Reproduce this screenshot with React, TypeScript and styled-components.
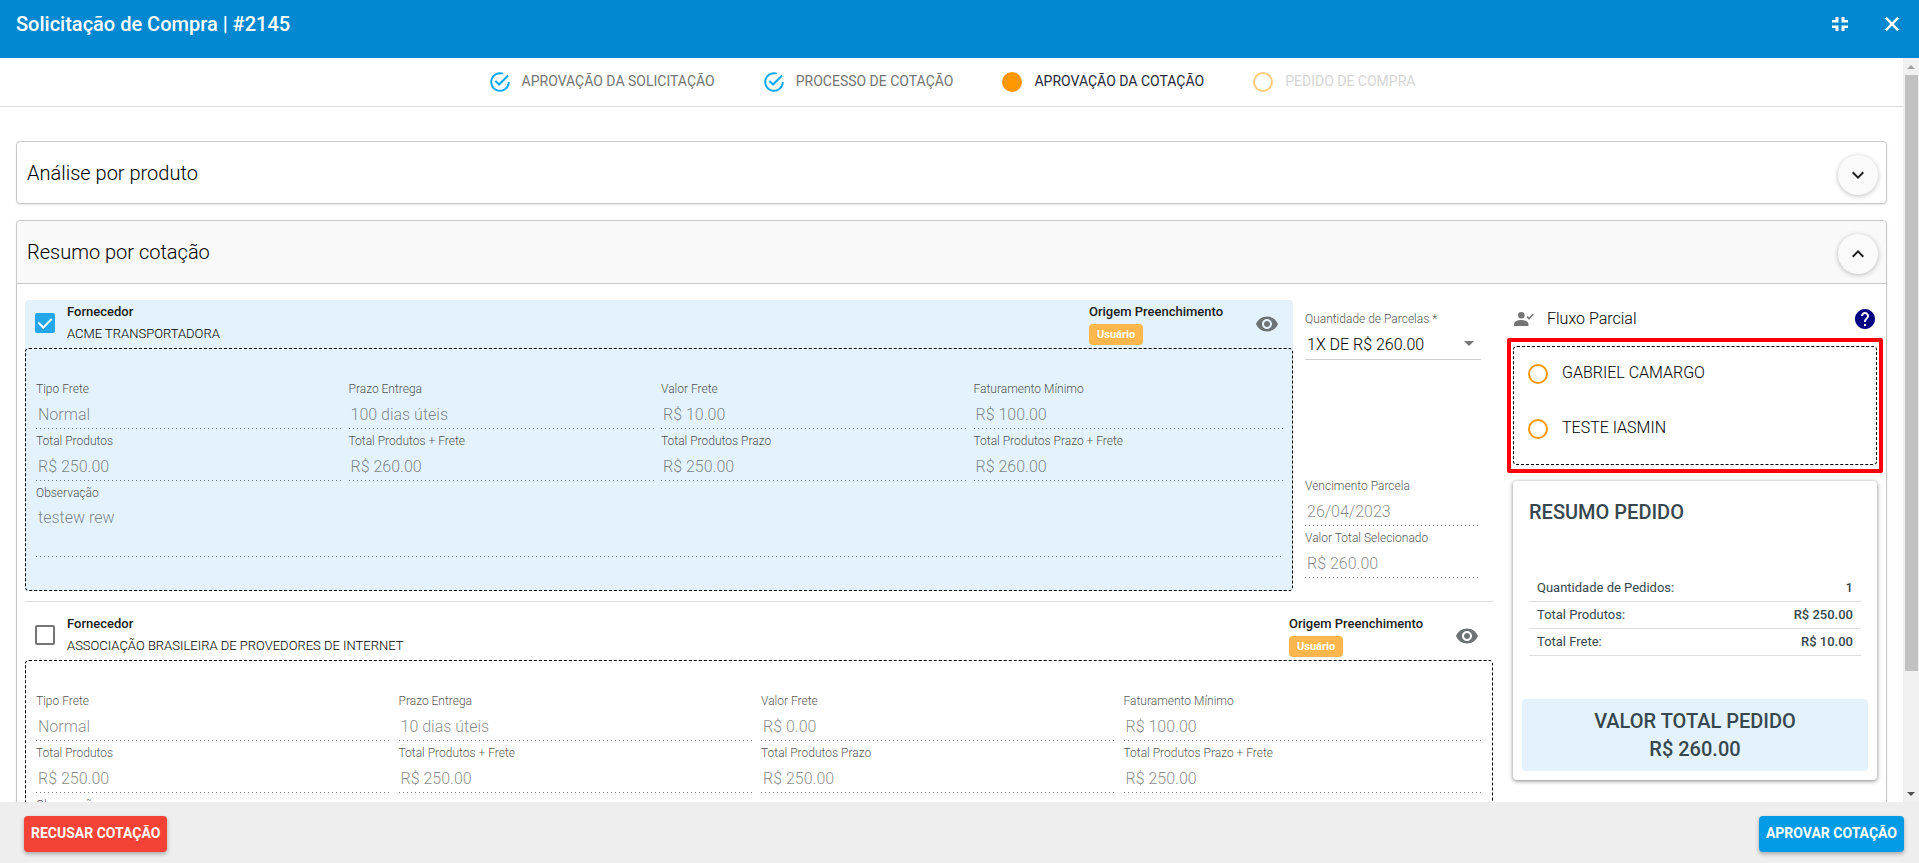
import React, { useId, useState } from "react";
import styled, { createGlobalStyle, css } from "styled-components";
import { IoMdCheckmarkCircleOutline } from "react-icons/io";
import { MdRemoveRedEye, MdHelp, MdArrowDropDown, MdKeyboardArrowDown, MdKeyboardArrowUp } from "react-icons/md";

const GlobalStyle = createGlobalStyle`
  * { box-sizing: border-box; }
  body {
    margin: 0;
    background: #fff;
    color: #000;
    font-family: Roboto, "Liberation Sans", sans-serif;
    font-size: 14px;
    font-weight: 300;
  }
  h1, h2, h3, p, dl, dd, dt, ol, ul { margin: 0; padding: 0; font-weight: inherit; }
  button, input, select, textarea { font-family: inherit; font-weight: inherit; }
  svg { display: block; }
`;

const Dialog = styled.div`
  display: flex;
  flex-direction: column;
  height: 100vh;
  overflow: hidden;
`;

const TopBar = styled.header`
  display: flex;
  justify-content: space-between;
  flex: none;
  height: 58px;
  padding: 10px 15px 0 16px;
  background: #0288d1;
  color: #fff;
`;

const DialogTitle = styled.h1`
  font-size: 20px;
  line-height: 28px;
  font-weight: 500;
`;

const TopActions = styled.div`
  display: flex;
  gap: 28px;
  height: 28px;
  align-items: center;
`;

const IconButton = styled.button`
  display: grid;
  place-items: center;
  width: 24px;
  height: 24px;
  padding: 0;
  border: 0;
  background: none;
  color: inherit;
  font-size: 24px;
  cursor: pointer;
`;

const Body = styled.div`
  display: flex;
  flex: 1;
  min-height: 0;
`;

const Scroller = styled.main`
  flex: 1;
  min-width: 0;
  overflow-y: auto;
  scrollbar-width: none;
`;

const ScrollBar = styled.div`
  display: flex;
  flex-direction: column;
  flex: none;
  width: 16px;
  background: #f1f1f1;
`;

const ScrollArrow = styled.div<{ $down?: boolean }>`
  display: grid;
  place-items: center;
  height: 17px;
  color: ${(p) => (p.$down ? "#505050" : "#a3a3a3")};
`;

const ScrollTrack = styled.div`
  flex: 1;
  padding: 0 1px 0 2px;
`;

const ScrollThumb = styled.div`
  height: 84%;
  background: #c1c1c1;
`;

const Steps = styled.ol`
  display: flex;
  justify-content: center;
  gap: 49px;
  height: 49px;
  padding-left: 2px;
  border-bottom: 1px solid #dedede;
  list-style: none;
`;

type StepState = "done" | "current" | "next";

const stepColor = { done: "#757575", current: "#28283c", next: "#d6d6d6" };

const StepItem = styled.li<{ $state: StepState }>`
  display: flex;
  align-items: center;
  gap: 12px;
  height: 48px;
  color: ${(p) => stepColor[p.$state]};
  font-size: 14px;
  line-height: 20px;
  font-weight: 400;
`;

const StepLabel = styled.span`
  padding-bottom: 2px;
`;

const StepMark = styled.span<{ $state: StepState }>`
  display: grid;
  place-content: center;
  width: 20px;
  height: 20px;
  color: ${(p) => (p.$state === "done" ? "#03a9f4" : "#ff9800")};
  font-size: 24px;
  opacity: ${(p) => (p.$state === "next" ? 0.5 : 1)};
`;

const Circle = styled.span<{ $filled?: boolean }>`
  width: 20px;
  height: 20px;
  border: 2px solid #ff9800;
  border-radius: 50%;
  background: ${(p) => (p.$filled ? "#ff9800" : "transparent")};
`;

const Panels = styled.div`
  display: flex;
  flex-direction: column;
  gap: 16px;
  padding: 34px 16px 24px;
`;

const Panel = styled.section`
  border: 1px solid #c8c8c8;
  border-radius: 4px;
  box-shadow: 0 1px 2px rgba(0, 0, 0, 0.1);
`;

const PanelHeader = styled.header<{ $open?: boolean }>`
  display: flex;
  align-items: center;
  justify-content: space-between;
  height: 61px;
  padding: 5px 8px 0 10px;
  ${(p) =>
    p.$open &&
    css`
      height: 63px;
      padding-top: 4px;
      background: #f9f9f9;
      border-bottom: 1px solid #c8c8c8;
      border-radius: 4px 4px 0 0;
    `}
`;

const PanelTitle = styled.h2`
  padding-bottom: 4px;
  font-size: 20px;
  line-height: 24px;
`;

const Fab = styled.button`
  display: grid;
  place-items: center;
  width: 40px;
  height: 40px;
  padding: 0;
  border: 0;
  border-radius: 50%;
  background: #fafafa;
  color: #212121;
  font-size: 24px;
  box-shadow: 0 1px 5px rgba(0, 0, 0, 0.26);
  cursor: pointer;
`;

const Summary = styled.div`
  display: grid;
  grid-template-columns: minmax(0, 1fr) 364px;
  gap: 20px;
  padding: 16px 9px 24px 8px;
`;

const QuoteList = styled.div`
  display: flex;
  flex-direction: column;
`;

const QuoteRow = styled.div`
  display: grid;
  grid-template-columns: minmax(0, 1fr);
  & + & {
    margin-top: 10px;
    padding-top: 10px;
    border-top: 1px solid #dedede;
  }
`;

const SplitRow = styled(QuoteRow)`
  grid-template-columns: minmax(0, 1fr) 188px;
  gap: 12px;
`;

const QuoteCard = styled.article<{ $selected?: boolean }>`
  border-radius: 4px;
  background: ${(p) => (p.$selected ? "#e3f2fd" : "transparent")};
`;

const QuoteHeader = styled.header`
  display: flex;
  height: 48px;
  padding: 0 14px 0 10px;
`;

const CheckBox = styled.input`
  appearance: none;
  display: grid;
  place-items: center;
  flex: none;
  width: 20px;
  height: 20px;
  margin: 13px 12px 0 0;
  border: 2px solid #757575;
  border-radius: 2px;
  cursor: pointer;
  &:checked {
    border-color: #22a7ea;
    background: #22a7ea;
  }
  &:checked::before {
    content: "";
    width: 6px;
    height: 11px;
    margin-top: -3px;
    border: solid #fff;
    border-width: 0 2px 2px 0;
    transform: rotate(45deg);
  }
`;

const Supplier = styled.label`
  flex: 1;
  padding-top: 1px;
  font-size: 13px;
  line-height: 22px;
  strong { display: block; color: #212121; font-weight: 500; }
`;

const Origin = styled.div`
  width: 166px;
  padding-top: 1px;
  font-size: 13px;
  line-height: 22px;
  strong { display: block; color: #212121; font-weight: 500; }
`;

const Badge = styled.span`
  display: inline-block;
  height: 21px;
  margin-top: 1px;
  padding: 0 8px;
  border-radius: 4px;
  background: #ffb74d;
  color: #fff;
  font-size: 11px;
  line-height: 21px;
  font-weight: 700;
  vertical-align: top;
`;

const EyeButton = styled(IconButton)`
  margin-top: 12px;
  color: #6d7275;
`;

const Details = styled.div`
  display: grid;
  grid-template-columns: repeat(4, minmax(0, 1fr));
  padding: 28px 6px 33px 10px;
  border: 1px dashed #000;
  border-radius: 4px;
`;

const FieldBox = styled.div<{ $wide?: boolean }>`
  display: flex;
  flex-direction: column;
  min-width: 0;
  padding: 5px 7px 0 0;
  ${(p) => p.$wide && "grid-column: 1 / -1;"}
  &:nth-child(4n), &:last-child { padding-right: 3px; }
`;

const FieldLabel = styled.label`
  color: rgba(0, 0, 0, 0.7);
  font-size: 12px;
  line-height: 14px;
`;

const valueStyle = css`
  display: block;
  width: 100%;
  height: 29px;
  margin-top: 4px;
  padding: 0 2px;
  border: 0;
  border-radius: 0;
  background: linear-gradient(to right, rgba(0, 0, 0, 0.5) 25%, transparent 0) 0 100% / 4px 1px repeat-x;
  color: rgba(0, 0, 0, 0.48);
  font-size: 16px;
  line-height: 20px;
`;

const FieldInput = styled.input`
  ${valueStyle}
`;

const FieldArea = styled.textarea`
  ${valueStyle}
  height: 53px;
  padding-top: 4px;
  resize: none;
  overflow: hidden;
`;

const Installments = styled.aside`
  display: flex;
  flex-direction: column;
  justify-content: space-between;
  padding: 7px 12px 13px 0;
`;

const FieldStack = styled.div`
  display: grid;
  ${FieldBox} { padding-right: 3px; }
`;

const SelectWrap = styled.div`
  display: grid;
  align-items: center;
  border-bottom: 1px solid #d0d0d0;
  svg { grid-area: 1 / 1; justify-self: end; color: #757575; font-size: 24px; pointer-events: none; }
`;

const Select = styled.select`
  grid-area: 1 / 1;
  appearance: none;
  width: 100%;
  height: 33px;
  padding: 3px 24px 0 2px;
  border: 0;
  background: transparent;
  color: #000;
  font-size: 16px;
`;

const Side = styled.aside`
  display: flex;
  flex-direction: column;
`;

const FlowHeader = styled.header`
  display: flex;
  align-items: center;
  height: 38px;
  margin-bottom: 8px;
  padding-left: 1px;
  color: #757575;
`;

const FlowTitle = styled.h3`
  flex: 1;
  padding-left: 13px;
  color: #000;
  font-size: 16px;
  line-height: 20px;
`;

const HelpButton = styled(IconButton)`
  color: #000080;
`;

const Approvers = styled.ul`
  position: relative;
  display: flex;
  flex-direction: column;
  gap: 35px;
  padding: 17px 14px 25px;
  border: 1px dashed #000;
  border-radius: 4px;
  list-style: none;
  &::after {
    content: "";
    position: absolute;
    inset: -9px -7px;
    border: 4px solid #fb0007;
    border-radius: 2px;
    pointer-events: none;
  }
`;

const Approver = styled.li`
  display: flex;
  gap: 14px;
  font-size: 16px;
  line-height: 18px;
`;

const OrderCard = styled.section`
  margin-top: 16px;
  padding: 19px 9px 9px;
  border-radius: 4px;
  color: #37474f;
  box-shadow: 0 1px 4px rgba(0, 0, 0, 0.5);
`;

const OrderTitle = styled.h3`
  padding-left: 7px;
  font-size: 20px;
  line-height: 24px;
  font-weight: 500;
`;

const OrderLines = styled.dl`
  margin: 51px 7px 0;
`;

const OrderLine = styled.div`
  display: flex;
  justify-content: space-between;
  height: 27px;
  padding: 0 8px;
  border-bottom: 1px solid #dedede;
  font-size: 13px;
  line-height: 26px;
  font-weight: 400;
  dd { font-weight: 500; }
`;

const OrderTotal = styled.div`
  margin-top: 43px;
  padding: 8px;
  border-radius: 4px;
  background: #e3f2fd;
  font-size: 20px;
  line-height: 28px;
  font-weight: 500;
  text-align: center;
`;

const Footer = styled.footer`
  display: flex;
  justify-content: space-between;
  flex: none;
  height: 61px;
  padding: 14px 15px 0 24px;
  background: #eee;
`;

const ActionButton = styled.button<{ $tone: "danger" | "primary" }>`
  height: 36px;
  padding: 0 7px 2px;
  border: 0;
  border-radius: 4px;
  background: ${(p) => (p.$tone === "danger" ? "#f44336" : "#039be5")};
  color: #fff;
  font-size: 14px;
  font-weight: 700;
  box-shadow: 0 2px 4px rgba(0, 0, 0, 0.3);
  cursor: pointer;
`;

function Field({ label, value, wide }: { label: string; value: string; wide?: boolean }) {
  const id = useId();
  return (
    <FieldBox $wide={wide}>
      <FieldLabel htmlFor={id}>{label}</FieldLabel>
      {wide ? <FieldArea id={id} readOnly value={value} /> : <FieldInput id={id} readOnly value={value} />}
    </FieldBox>
  );
}

function Step({ state, children }: { state: StepState; children: React.ReactNode }) {
  return (
    <StepItem $state={state} aria-current={state === "current" ? "step" : undefined}>
      <StepMark $state={state}>
        {state === "done" ? <IoMdCheckmarkCircleOutline /> : <Circle $filled={state === "current"} />}
      </StepMark>
      <StepLabel>{children}</StepLabel>
    </StepItem>
  );
}

type QuoteData = { supplier: string; fields: [string, string][]; note: string };

function Quote({ data, initial }: { data: QuoteData; initial: boolean }) {
  const id = useId();
  const [checked, setChecked] = useState(initial);
  return (
    <QuoteCard $selected={checked}>
      <QuoteHeader>
        <CheckBox id={id} type="checkbox" checked={checked} onChange={(e) => setChecked(e.target.checked)} />
        <Supplier htmlFor={id}>
          <strong>Fornecedor</strong>
          {data.supplier}
        </Supplier>
        <Origin>
          <strong>Origem Preenchimento</strong>
          <Badge>Usuário</Badge>
        </Origin>
        <EyeButton type="button" aria-label="Visualizar cotação">
          <MdRemoveRedEye />
        </EyeButton>
      </QuoteHeader>
      <Details>
        {data.fields.map(([label, value]) => (
          <Field key={label} label={label} value={value} />
        ))}
        <Field wide label="Observação" value={data.note} />
      </Details>
    </QuoteCard>
  );
}

const quotes: QuoteData[] = [
  {
    supplier: "ACME TRANSPORTADORA",
    fields: [
      ["Tipo Frete", "Normal"],
      ["Prazo Entrega", "100 dias úteis"],
      ["Valor Frete", "R$ 10.00"],
      ["Faturamento Mínimo", "R$ 100.00"],
      ["Total Produtos", "R$ 250.00"],
      ["Total Produtos + Frete", "R$ 260.00"],
      ["Total Produtos Prazo", "R$ 250.00"],
      ["Total Produtos Prazo + Frete", "R$ 260.00"],
    ],
    note: "testew rew",
  },
  {
    supplier: "ASSOCIAÇÃO BRASILEIRA DE PROVEDORES DE INTERNET",
    fields: [
      ["Tipo Frete", "Normal"],
      ["Prazo Entrega", "10 dias úteis"],
      ["Valor Frete", "R$ 0.00"],
      ["Faturamento Mínimo", "R$ 100.00"],
      ["Total Produtos", "R$ 250.00"],
      ["Total Produtos + Frete", "R$ 250.00"],
      ["Total Produtos Prazo", "R$ 250.00"],
      ["Total Produtos Prazo + Frete", "R$ 250.00"],
    ],
    note: "",
  },
];

const PersonCheck = () => (
  <svg width="20" height="14" viewBox="0 0 20 14" fill="currentColor" aria-hidden="true">
    <circle cx="7.3" cy="3.3" r="3.3" />
    <path d="M0 14v-2.200C0 9.300 4 8 7.200 8s7.200 1.300 7.200 3.800V14z" />
    <path d="M13 4.600l2 2 4.400-4.400" fill="none" stroke="currentColor" strokeWidth="1.500" />
  </svg>
);

const Shrink = () => (
  <svg width="16" height="14" viewBox="0 0 16 14" fill="currentColor" aria-hidden="true">
    <path d="M0 3h3.500V0h3v5.500H0zM16 3h-3.500V0h-3v5.500H16zM0 11h3.500v3h3V8.500H0zM16 11h-3.500v3h-3V8.500H16z" />
  </svg>
);

const Close = () => (
  <svg width="16" height="16" viewBox="0 0 16 16" fill="none" stroke="currentColor" strokeWidth="2.600" aria-hidden="true">
    <path d="M1.700 1.700l12.600 12.600M14.300 1.700L1.700 14.300" />
  </svg>
);

export default function App() {
  return (
    <Dialog>
      <GlobalStyle />
      <TopBar>
        <DialogTitle>Solicitação de Compra | #2145</DialogTitle>
        <TopActions>
          <IconButton type="button" aria-label="Restaurar">
            <Shrink />
          </IconButton>
          <IconButton type="button" aria-label="Fechar">
            <Close />
          </IconButton>
        </TopActions>
      </TopBar>

      <Body>
        <Scroller>
          <Steps>
            <Step state="done">APROVAÇÃO DA SOLICITAÇÃO</Step>
            <Step state="done">PROCESSO DE COTAÇÃO</Step>
            <Step state="current">APROVAÇÃO DA COTAÇÃO</Step>
            <Step state="next">PEDIDO DE COMPRA</Step>
          </Steps>

          <Panels>
            <Panel>
              <PanelHeader>
                <PanelTitle>Análise por produto</PanelTitle>
                <Fab type="button" aria-label="Expandir">
                  <MdKeyboardArrowDown />
                </Fab>
              </PanelHeader>
            </Panel>

            <Panel>
              <PanelHeader $open>
                <PanelTitle>Resumo por cotação</PanelTitle>
                <Fab type="button" aria-label="Recolher">
                  <MdKeyboardArrowUp />
                </Fab>
              </PanelHeader>
              <Summary>
                <QuoteList>
                  <SplitRow>
                    <Quote data={quotes[0]} initial />
                    <Installments>
                      <div>
                        <FieldBox>
                          <FieldLabel htmlFor="parcelas">Quantidade de Parcelas *</FieldLabel>
                        </FieldBox>
                        <SelectWrap>
                          <Select id="parcelas" defaultValue="1">
                            <option value="1">1X DE R$ 260.00</option>
                          </Select>
                          <MdArrowDropDown aria-hidden="true" />
                        </SelectWrap>
                      </div>
                      <FieldStack>
                        <Field label="Vencimento Parcela" value="26/04/2023" />
                        <Field label="Valor Total Selecionado" value="R$ 260.00" />
                      </FieldStack>
                    </Installments>
                  </SplitRow>
                  <QuoteRow>
                    <Quote data={quotes[1]} initial={false} />
                  </QuoteRow>
                </QuoteList>

                <Side>
                  <FlowHeader>
                    <PersonCheck />
                    <FlowTitle>Fluxo Parcial</FlowTitle>
                    <HelpButton type="button" aria-label="Ajuda">
                      <MdHelp />
                    </HelpButton>
                  </FlowHeader>
                  <Approvers>
                    <Approver>
                      <Circle />
                      GABRIEL CAMARGO
                    </Approver>
                    <Approver>
                      <Circle />
                      TESTE IASMIN
                    </Approver>
                  </Approvers>
                  <OrderCard>
                    <OrderTitle>RESUMO PEDIDO</OrderTitle>
                    <OrderLines>
                      <OrderLine>
                        <dt>Quantidade de Pedidos:</dt>
                        <dd>1</dd>
                      </OrderLine>
                      <OrderLine>
                        <dt>Total Produtos:</dt>
                        <dd>R$ 250.00</dd>
                      </OrderLine>
                      <OrderLine>
                        <dt>Total Frete:</dt>
                        <dd>R$ 10.00</dd>
                      </OrderLine>
                    </OrderLines>
                    <OrderTotal>
                      <p>VALOR TOTAL PEDIDO</p>
                      <p>R$ 260.00</p>
                    </OrderTotal>
                  </OrderCard>
                </Side>
              </Summary>
            </Panel>
          </Panels>
        </Scroller>
        <ScrollBar aria-hidden="true">
          <ScrollArrow>
            <svg width="8" height="4" viewBox="0 0 8 4" fill="currentColor">
              <path d="M4 0l4 4H0z" />
            </svg>
          </ScrollArrow>
          <ScrollTrack>
            <ScrollThumb />
          </ScrollTrack>
          <ScrollArrow $down>
            <svg width="8" height="4" viewBox="0 0 8 4" fill="currentColor">
              <path d="M0 0h8L4 4z" />
            </svg>
          </ScrollArrow>
        </ScrollBar>
      </Body>

      <Footer>
        <ActionButton type="button" $tone="danger">RECUSAR COTAÇÃO</ActionButton>
        <ActionButton type="button" $tone="primary">APROVAR COTAÇÃO</ActionButton>
      </Footer>
    </Dialog>
  );
}
